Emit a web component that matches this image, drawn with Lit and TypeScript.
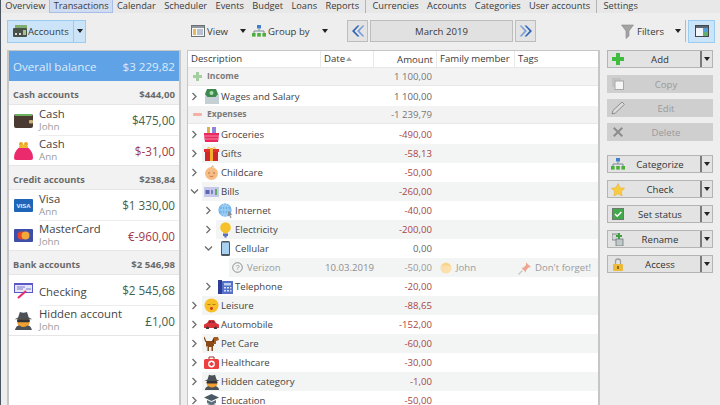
import { LitElement, html, css, svg, nothing } from "lit";
import { customElement } from "lit/decorators.js";

const ic = (w: number, h: number, body: unknown) =>
  html`<svg class="ic" width=${w} height=${h} viewBox="0 0 ${w} ${h}">${body}</svg>`;

const spy = svg`<circle cx="8" cy="9" r="5.4" fill="#f0a030"/><path d="M3.5 5.5 L5 .8 Q8 2.2 11 .8 L12.5 5.5 L15.5 7 H.5Z" fill="#4b5157"/><rect x="2.6" y="7" width="10.8" height="2.6" rx="1.2" fill="#2f3338"/><path d="M.8 16 Q2 12 5 12.4 Q8 14.6 11 12.4 Q14 12 15.2 16Z" fill="#4b5157"/>`;

const icons: Record<string, unknown> = {
  accounts: ic(16, 14, svg`<rect x="3" y="1" width="12" height="7" fill="#7fae6e"/><rect x="1" y="4" width="14" height="9" rx="1" fill="#4a5148"/><rect x="3" y="9" width="2" height="2" fill="#d8d8d8"/><rect x="7" y="9" width="2" height="2" fill="#d8d8d8"/><rect x="11" y="6" width="3" height="5" fill="#9fc58c"/>`),
  view: ic(14, 12, svg`<rect x=".5" y=".5" width="13" height="11" fill="#f6f6f6" stroke="#6b7076"/><rect x="1" y="1" width="12" height="2" fill="#8f97a0"/><rect x="2" y="4" width="3" height="6" fill="#e9b95c"/><path d="M6 5h6M6 7h6M6 9h6" stroke="#7a8da8"/>`),
  group: ic(14, 12, svg`<rect x="5" y="0" width="4" height="3.5" fill="#3f7fd0"/><path d="M7 3.5V6M2 8V6H12V8" stroke="#7a8a99" fill="none"/><rect x="0" y="8" width="3.6" height="3.6" fill="#4caf3c"/><rect x="5.2" y="8" width="3.6" height="3.6" fill="#4caf3c"/><rect x="10.4" y="8" width="3.6" height="3.6" fill="#4caf3c"/>`),
  left: ic(14, 12, svg`<path d="M6.5 0.5 L1 6 L6.5 11.5 L8.5 11.5 L3.5 6 L8.5 .5Z" fill="#2f66b8"/><path d="M11.5 .5 L6 6 L11.5 11.5 L13.5 11.5 L8.5 6 L13.5 .5Z" fill="#7d9fd6"/>`),
  right: ic(14, 12, svg`<path d="M7.5 .5 L13 6 L7.5 11.5 L5.5 11.5 L10.5 6 L5.5 .5Z" fill="#2f66b8"/><path d="M2.5 .5 L8 6 L2.5 11.5 L.5 11.5 L5.5 6 L.5 .5Z" fill="#7d9fd6"/>`),
  funnel: ic(13, 15, svg`<path d="M.5 1 H12.5 L8 7 V12 L5 14.5 V7Z" fill="#a3a3a3" stroke="#8b8b8b" stroke-width=".6"/>`),
  panel: ic(14, 12, svg`<rect x=".5" y=".5" width="13" height="11" fill="#f2f6fa" stroke="#40464c"/><rect x="1" y="1" width="12" height="2" fill="#5a6772"/><rect x="8" y="3" width="5" height="4" fill="#4fa0d8"/><rect x="8" y="7" width="5" height="4" fill="#61b06c"/>`),
  wallet: ic(19, 15, svg`<rect x="0" y="1" width="19" height="14" rx="2" fill="#4a3a32"/><rect x="1" y="1" width="17" height="2" fill="#6bb05c"/><rect x="15" y="7" width="4" height="3.4" rx="1" fill="#c9b27a"/>`),
  purse: ic(19, 20, svg`<circle cx="7" cy="3" r="2" fill="#e9a820"/><circle cx="12" cy="3" r="2" fill="#e9a820"/><path d="M5 5 Q9.5 2 14 5 L14 8 H5Z" fill="#f0b830"/><path d="M4.5 7 H14.5 Q19 11 19 17 Q19 19 17 19 H2 Q0 19 0 17 Q0 11 4.5 7Z" fill="#ea2a6c"/>`),
  visa: ic(19, 13, svg`<rect width="19" height="13" rx="1" fill="#1f66b8"/><text x="9.5" y="9" font-size="6" font-weight="700" font-family="Liberation Sans" fill="#e8f0fa" text-anchor="middle">VISA</text>`),
  mc: ic(19, 13, svg`<rect width="19" height="13" rx="1" fill="#3f4fa8"/><circle cx="7.5" cy="6.5" r="4" fill="#e8432e"/><circle cx="11.5" cy="6.5" r="4" fill="#f2a93a"/>`),
  check: ic(19, 16, svg`<rect x="0" y="0" width="19" height="10" fill="#5a58c8"/><rect x="1" y="2" width="17" height="7" fill="#e6e6f6"/><path d="M3 4h8M12 6h5M3 6h6" stroke="#7a78cc"/><path d="M4 15 L12 8" stroke="#ec2c6c" stroke-width="2.2"/>`),
  spy: ic(16, 16, spy),
  spyB: ic(19, 19, svg`<g transform="scale(1.18)">${spy}</g>`),
  plusS: ic(9, 9, svg`<path d="M3 0h3v3h3v3H6v3H3V6H0V3h3z" fill="#a4d0a0"/>`),
  minusS: ic(9, 9, svg`<rect x="0" y="3" width="9" height="3" rx="1" fill="#f2b1a4"/>`),
  wages: ic(15, 15, svg`<rect x="1" y="5" width="14" height="10" fill="#c5d0d4"/><path d="M3 0h9l2 5-2.5 3h-8L1 5z" fill="#3e8a4c"/><circle cx="7.5" cy="4" r="2" fill="#a9dcae"/>`),
  groceries: ic(15, 15, svg`<rect x="3" y="0" width="3" height="6" fill="#e0b040"/><rect x="8" y="0" width="4" height="6" fill="#8f86da"/><path d="M0 6h15v2l-1 7H1L0 8z" fill="#e8285f"/><path d="M0 9h15M0 12h15" stroke="#f58aa8"/>`),
  gifts: ic(15, 15, svg`<rect x="1" y="4" width="13" height="11" fill="#d02828"/><rect x="0" y="3" width="15" height="3" fill="#e03030"/><rect x="6" y="2" width="3" height="13" fill="#f0b030"/><path d="M7.5 3 Q3 0 4 3M7.5 3 Q12 0 11 3" stroke="#f0b030" fill="none"/>`),
  baby: ic(15, 15, svg`<circle cx="7.5" cy="8.5" r="6.5" fill="#f8bd85"/><circle cx="5" cy="8" r=".8" fill="#9a6a40"/><circle cx="10" cy="8" r=".8" fill="#9a6a40"/><path d="M5.5 11q2 1.4 4 0" stroke="#c47a50" fill="none"/><path d="M7.5 2q1-1.5 2-.6" stroke="#b98a55" fill="none"/>`),
  bills: ic(15, 10, svg`<rect width="15" height="10" fill="#c6c8ea"/><rect x="1.5" y="3" width="4" height="4" fill="#5f63b0"/><rect x="7" y="3" width="2" height="4" fill="#7a80c0"/><rect x="11" y="2" width="2" height="6" fill="#5dae6a"/>`),
  internet: ic(15, 15, svg`<circle cx="7" cy="7" r="6.6" fill="#6fb4ea"/><path d="M0 7h14M7 0v14M2 3h10M2 11h10" stroke="#a8d4f4" fill="none"/><ellipse cx="7" cy="7" rx="3" ry="6.5" stroke="#a8d4f4" fill="none"/><path d="M10 8l4.5 3.5-2 .5 1 2.5-1.2.5-1-2.5L10 13.5z" fill="#8a8f94"/>`),
  bulb: ic(15, 16, svg`<circle cx="7.5" cy="5.5" r="5.3" fill="#f6c22c"/><path d="M5 9h5v2.5H5z" fill="#f6c22c"/><rect x="5" y="11.5" width="5" height="2.5" fill="#5a6fc0"/><rect x="6.4" y="14" width="2.2" height="1.6" fill="#5a6fc0"/>`),
  phone: ic(15, 15, svg`<rect x="3" y="0" width="9" height="15" rx="1.5" fill="#4d5760"/><rect x="4" y="1.5" width="7" height="11.5" fill="#a8d0f0"/>`),
  tel: ic(15, 14, svg`<rect x="0" y="0" width="4" height="14" fill="#2e3e98"/><rect x="4" y="1" width="11" height="13" fill="#5670c8"/><rect x="6" y="3" width="7" height="2.5" fill="#bcd0f0"/><path d="M6 7h2v1.5H6zM9 7h2v1.5H9zM12 7h1.5v1.5H12zM6 10h2v1.5H6zM9 10h2v1.5H9zM12 10h1.5v1.5H12z" fill="#d8e2f6"/>`),
  leisure: ic(15, 15, svg`<circle cx="7.5" cy="7.5" r="7" fill="#f8c026"/><path d="M3.5 6.5h3M8.5 6.5h3" stroke="#b47b10"/><circle cx="7.5" cy="10.5" r="1.4" fill="#d03020"/>`),
  car: ic(15, 9, svg`<path d="M3 3 L5 0 H10 L12 3 L15 4.5 V8 H0 V4.5Z" fill="#d8343a"/><path d="M5.5 1h1.8v2H4.3zM8.2 1H10l1 2H8.2z" fill="#8a2a30"/><circle cx="3.5" cy="8" r="1.6" fill="#3d3d3d"/><circle cx="11.5" cy="8" r="1.6" fill="#3d3d3d"/>`),
  dog: ic(15, 15, svg`<path d="M2 5h8v5h-1v5H7v-4H5v4H3v-4H2z" fill="#8a4a18"/><path d="M10 5 L10 1 L14 1 L15 4 L12 5 L12 8 H9z" fill="#a45a20"/><path d="M10 1l-2 4 2 2z" fill="#5a2f10"/><path d="M3 10v5M7 11v4" stroke="#e8e0d8"/><path d="M2 6L0 1" stroke="#8a4a18" stroke-width="1.2"/>`),
  health: ic(15, 13, svg`<path d="M5 3V1h5v2" stroke="#a52a2a" fill="none"/><rect y="3" width="15" height="10" rx="1.5" fill="#ec4040"/><circle cx="7.5" cy="8" r="3.4" fill="#fff"/><path d="M6.6 6h1.8v1.1h1.1v1.8H8.4V10H6.6V8.9H5.5V7.1h1.1z" fill="#ec4040"/>`),
  edu: ic(15, 14, svg`<path d="M7.5 0 L15 3.5 L7.5 7 L0 3.5Z" fill="#4a5a64"/><path d="M3 6v3q4.5 2.5 9 0V6l-4.5 2z" fill="#5d6f7a"/><path d="M3 11q4.5-2 9 0v3H3z" fill="#5d6f7a"/>`),
  help: ic(11, 11, svg`<circle cx="5.5" cy="5.5" r="4.8" fill="none" stroke="#8d8d8d"/><text x="5.5" y="8.2" font-size="7.5" font-family="Liberation Sans" fill="#8d8d8d" text-anchor="middle">?</text>`),
  johnBaby: ic(12, 13, svg`<circle cx="6" cy="7" r="5.6" fill="#fbe0ae"/><path d="M1 5.5Q6 -2 11 5.5Q6 3.5 1 5.5" fill="#f8d58a"/>`),
  pin: ic(14, 14, svg`<path d="M8 1.5 L13 6 L10.5 6.5 L8 9.5 L8 11.5 L3.5 7 L5.5 6.5 L8 4Z" fill="#efa58f"/><path d="M4.5 9.5 L.5 13.5" stroke="#c9c9c9" stroke-width="1.4"/>`),
  add: ic(12, 12, svg`<path d="M4 0h4v4h4v4H8v4H4V8H0V4h4z" fill="#3fbd3f"/>`),
  copy: ic(12, 12, svg`<rect x="0" y="0" width="8" height="8" fill="#c4c4c4" stroke="#bcbcbc"/><rect x="3" y="3" width="8.5" height="8.5" fill="#f6f6f6" stroke="#a8a8a8"/>`),
  edit: ic(14, 14, svg`<path d="M1 13 L2 9.5 L11 1 L13.4 3.4 L4.4 12Z" fill="#dcdcdc" stroke="#8c8c8c"/>`),
  del: ic(12, 12, svg`<path d="M1 2.5 L2.5 1 L6 4.5 L9.5 1 L11 2.5 L7.5 6 L11 9.5 L9.5 11 L6 7.5 L2.5 11 L1 9.5 L4.5 6Z" fill="#8e8e8e"/>`),
  star: ic(14, 13, svg`<path d="M7 .5l2 4.2 4.6.6-3.3 3.2.8 4.5L7 10.8 2.9 13l.8-4.5L.4 5.3 5 4.7z" fill="#f8cc40" stroke="#e8a828" stroke-width=".5"/>`),
  status: ic(12, 12, svg`<rect width="12" height="12" fill="#6a7a6c"/><rect x="1" y="1" width="10" height="10" fill="#42a84a"/><path d="M3 6l2.2 2.2L9.4 4" stroke="#fff" stroke-width="1.5" fill="none"/>`),
  rename: ic(12, 13, svg`<rect y="1" width="7" height="6" fill="#d8d8d8" stroke="#5e6a70" stroke-width=".7"/><rect x="4" y="6" width="7" height="7" fill="#c0c8c8" stroke="#5e6a70" stroke-width=".7"/><path d="M6 0h2v2h2v2H8v2H6V4H4V2h2z" fill="#3fa040"/>`),
  lock: ic(10, 13, svg`<path d="M2.5 6V3.5a2.5 2.5 0 0 1 5 0V6" stroke="#a0a0a0" stroke-width="1.3" fill="none"/><rect y="6" width="10" height="7" rx="1" fill="#ecb93a"/><rect x="4.2" y="8" width="1.6" height="3" fill="#7a5a10"/>`),
};

const menu1 = ["Overview", "Transactions", "Calendar", "Scheduler", "Events", "Budget", "Loans", "Reports"];
const menu2 = ["Currencies", "Accounts", "Categories", "User accounts"];

type Acc = { icon: string; name: string; sub?: string; amt: string; red?: boolean };
const accGroups: { title: string; total: string; items: Acc[] }[] = [
  { title: "Cash accounts", total: "$444,00", items: [
    { icon: "wallet", name: "Cash", sub: "John", amt: "$475,00" },
    { icon: "purse", name: "Cash", sub: "Ann", amt: "$-31,00", red: true } ] },
  { title: "Credit accounts", total: "$238,84", items: [
    { icon: "visa", name: "Visa", sub: "Ann", amt: "$1 330,00" },
    { icon: "mc", name: "MasterCard", sub: "John", amt: "€-960,00", red: true } ] },
  { title: "Bank accounts", total: "$2 546,98", items: [
    { icon: "check", name: "Checking", amt: "$2 545,68" },
    { icon: "spyB", name: "Hidden account", sub: "John", amt: "£1,00" } ] },
];

type Row = { k?: "group" | "tx"; lvl?: number; open?: boolean; icon: string; name: string; amt: string; red?: boolean };
const rows: Row[] = [
  { k: "group", icon: "plusS", name: "Income", amt: "1 100,00" },
  { lvl: 0, icon: "wages", name: "Wages and Salary", amt: "1 100,00" },
  { k: "group", icon: "minusS", name: "Expenses", amt: "-1 239,79" },
  { lvl: 0, icon: "groceries", name: "Groceries", amt: "-490,00", red: true },
  { lvl: 0, icon: "gifts", name: "Gifts", amt: "-58,13", red: true },
  { lvl: 0, icon: "baby", name: "Childcare", amt: "-50,00", red: true },
  { lvl: 0, open: true, icon: "bills", name: "Bills", amt: "-260,00", red: true },
  { lvl: 1, icon: "internet", name: "Internet", amt: "-40,00", red: true },
  { lvl: 1, icon: "bulb", name: "Electricity", amt: "-200,00", red: true },
  { lvl: 1, open: true, icon: "phone", name: "Cellular", amt: "0,00" },
  { k: "tx", lvl: 2, icon: "help", name: "Verizon", amt: "-50,00" },
  { lvl: 1, icon: "tel", name: "Telephone", amt: "-20,00", red: true },
  { lvl: 0, icon: "leisure", name: "Leisure", amt: "-88,65", red: true },
  { lvl: 0, icon: "car", name: "Automobile", amt: "-152,00", red: true },
  { lvl: 0, icon: "dog", name: "Pet Care", amt: "-60,00", red: true },
  { lvl: 0, icon: "health", name: "Healthcare", amt: "-30,00", red: true },
  { lvl: 0, icon: "spy", name: "Hidden category", amt: "-1,00", red: true },
  { lvl: 0, icon: "edu", name: "Education", amt: "-50,00", red: true },
];

const chev = (open: boolean) => html`<svg class="chev" width="9" height="9" viewBox="0 0 9 9"><path d=${open ? "M1 2.5 L4.5 6 L8 2.5" : "M2.5 1 L6 4.5 L2.5 8"} fill="none" stroke="#6e6e6e" stroke-width="1.3"/></svg>`;

type Btn = { icon: string; label: string; off?: boolean; split?: boolean };
const btnGroups: Btn[][] = [
  [ { icon: "add", label: "Add", split: true }, { icon: "copy", label: "Copy", off: true }, { icon: "edit", label: "Edit", off: true }, { icon: "del", label: "Delete", off: true } ],
  [ { icon: "group", label: "Categorize", split: true }, { icon: "star", label: "Check", split: true }, { icon: "status", label: "Set status", split: true }, { icon: "rename", label: "Rename", split: true }, { icon: "lock", label: "Access", split: true } ],
];

@customElement("app-root")
export class AppRoot extends LitElement {
  static styles = css`
    :host { display: block; width: 720px; height: 405px; overflow: hidden; background: #eeeeee; color: #3a3a3a;
      font: 9.6px/13px "Open Sans", "Noto Sans", sans-serif; box-sizing: border-box; border-left: 1px solid #4a5561; }
    * { box-sizing: border-box; }
    svg { display: block; flex: none; }
    .menu { height: 13px; background: #e8e8e8; display: flex; font-size: 9.25px; }
    .menu span { padding: 0 4.2px; height: 13px; line-height: 12px; white-space: nowrap; flex: none; }
    .menu .sel { background: #cfdcf2; border: 1px solid #a7bfe6; border-top: 0; height: 13px; line-height: 12px; padding: 0 3.2px; }
    .menu .sep { width: 1px; padding: 0; background: #b4b4b4; margin: 0 2px 2px; }
    .tools { height: 37px; display: flex; align-items: center; padding: 0 7px 1px 6px; }
    .tools > * { flex: none; }
    .acc { width: 79px; height: 23px; display: flex; background: #cce4f7; border: 1px solid #9accf2; margin-right: 105px; }
    .acc .m { flex: 1; display: flex; align-items: center; padding-left: 4px; border-right: 1px solid #9accf2; }
    .acc .c { width: 11px; flex: none; display: flex; align-items: center; justify-content: center; }
    .caret { width: 0; height: 0; border: 3px solid transparent; border-top: 4px solid #222; border-bottom: 0; flex: none; }
    .ti { display: flex; align-items: center; gap: 2px; }
    .ti .caret { margin-left: 10px; }
    .view { width: 61px; }
    .grp { width: 95px; }
    .nav { width: 21px; height: 22px; border: 1px solid #bdbdbd; background: #e4e4e4; display: flex; align-items: center; justify-content: center; }
    .month { width: 143px; height: 22px; margin: 0 2px; border: 1px solid #bdbdbd; background: #e1e1e1; display: flex; align-items: center; justify-content: center; }
    .flt { display: flex; align-items: center; margin-left: 85px; gap: 3px; }
    .flt .caret { margin-left: 8px; }
    .vsep { width: 1px; height: 22px; background: #b8b8b8; margin: 0 2px 0 4px; }
    .pbtn { width: 27px; height: 23px; background: #cce4f7; border: 1px solid #9accf2; display: flex; align-items: center; justify-content: center; }
    .main { display: flex; height: 355px; padding: 0 6px; }
    .left { width: 174px; flex: none; margin-right: 6px; background: #fff; border: 1px solid #c6c6c6; border-bottom: 0; border-left-width: 2px; border-right-width: 2px; }
    .bal { height: 30px; background: #5fa3e6; color: #dcebfa; display: flex; justify-content: space-between; align-items: center; padding: 1px 4px 0; font-size: 11.6px; }
    .gh { height: 24px; display: flex; justify-content: space-between; align-items: center; padding: 3px 4px 0; background: #f2f2f2; color: #6a6a6a; font-weight: 700; font-size: 9.2px; border-bottom: 1px solid #e6e6e6; }
    .gh span + span { font-size: 9.6px; }
    .ar { height: 30.5px; display: flex; align-items: center; }
    .ai { width: 30px; flex: none; padding: 1px 0 0 5px; display: flex; justify-content: flex-start; }
    .ab { flex: 1; display: flex; align-items: center; height: 100%; border-bottom: 1px solid #ededed; padding-right: 4px; min-width: 0; }
    .ar.last { border-bottom: 1px solid #e6e6e6; }
    .ar.last .ab { border-bottom: 0; }
    .an { flex: 1; }
    .an div:first-child { font-size: 11.3px; line-height: 14px; color: #444; }
    .an div + div { font-size: 9.8px; line-height: 12px; color: #9a9a9a; }
    .an.solo { padding-top: 4px; }
    .aa { font-size: 11.7px; color: #3f6350; padding-top: 2px; }
    .aa.red { color: #a23a48; }
    .tbl { width: 413px; flex: none; margin-right: 7px; background: #fff; border: 1px solid #c6c6c6; border-bottom: 0; border-right-width: 2px; overflow: hidden; }
    .cols { display: flex; align-items: stretch; }
    .d { flex: 1; min-width: 0; display: flex; align-items: center; white-space: nowrap; }
    .dt { width: 53px; flex: none; padding-left: 3px; white-space: nowrap; }
    .am { width: 63px; flex: none; text-align: right; padding-right: 5px; white-space: nowrap; }
    .fm { width: 78px; flex: none; padding-left: 3px; display: flex; align-items: center; gap: 4px; white-space: nowrap; }
    .tg { width: 83px; flex: none; padding-left: 3px; display: flex; align-items: center; gap: 3px; white-space: nowrap; }
    .head { height: 17px; border-bottom: 1px solid #e8e8e8; }
    .head > div { border-right: 1px solid #e8e8e8; line-height: 18px; height: 16px; }
    .head .d { padding-left: 3px; }
    .head .am { padding-right: 3px; }
    .head .tg { border-right: 0; }
    .sort { width: 0; height: 0; border: 3px solid transparent; border-bottom: 4px solid #a5a5a5; border-top: 0; margin-left: 1px; }
    .dt.hd { display: flex; align-items: center; }
    .gr { height: 18px; line-height: 17px; background: #f3f3f3; color: #7b7b7b; font-weight: 700; font-size: 8.6px; border-bottom: 1px solid #e8e8e8; margin-bottom: 1px; }
    .gr .d { padding-left: 5px; gap: 5px; }
    .gr .am { color: #777; font-size: 9.6px; font-weight: 400; }
    .tr { height: 19px; display: flex; color: #444; }
    .tr .cw { width: 14px; flex: none; display: flex; align-items: center; justify-content: center; padding-right: 1px; }
    .tr.l1 { padding-left: 14px; }
    .tr.l2 { padding-left: 27px; }
    .tr .cols { flex: 1; min-width: 0; align-items: center; height: 19px; }
    .tr .cols > div { height: 19px; line-height: 19px; }
    .tr.alt .cols { background: #f3f4f4; }
    .tr .d { gap: 2px; padding-left: 2px; }
    .tr .iw { width: 15px; display: flex; justify-content: center; flex: none; }
    .tr .am { color: #666; }
    .tr .am.red { color: #a84545; }
    .tr.tx { color: #9b9b9b; }
    .tr.tx .am { color: #999; }
    .tr.tx .iw { width: 11px; }
    .tr.tx .d { gap: 4px; padding-left: 3px; }
    .tr.tx .dt { color: #8e8e8e; padding-left: 4px; }
    .side { width: 106px; flex: none; display: flex; flex-direction: column; gap: 14px; }
    .bg { display: flex; flex-direction: column; gap: 6px; }
    .bg.wide { gap: 7px; }
    .bg .b.first { margin-bottom: 1px; }
    .b { height: 18px; display: flex; align-items: center; background: #e3e3e3; border: 1px solid #b4b4b4; padding-left: 2px; color: #333; }
    .b .bi { width: 16px; flex: none; display: flex; justify-content: center; }
    .b .bl { flex: 1; text-align: center; padding-right: 6px; }
    .b.off { background: #cfcfcf; border-color: #cfcfcf; color: #9a9a9a; }
    .b .sp { width: 12px; flex: none; height: 100%; border-left: 2px solid #7a7a7a; display: flex; align-items: center; justify-content: center; background: #e3e3e3; }
    .b .sp .caret { border-width: 3.5px; border-bottom: 0; border-top-width: 4px; }
  `;

  render() {
    return html`
      <div class="menu">
        ${menu1.map((m, i) => html`<span class=${i === 1 ? "sel" : ""}>${m}</span>`)}
        <span class="sep"></span>
        ${menu2.map((m) => html`<span>${m}</span>`)}
        <span class="sep"></span>
        <span>Settings</span>
      </div>
      <div class="tools">
        <div class="acc"><div class="m">${icons.accounts}<span>Accounts</span></div><div class="c"><i class="caret"></i></div></div>
        <div class="ti view">${icons.view}<span>View</span><i class="caret"></i></div>
        <div class="ti grp">${icons.group}<span>Group by</span><i class="caret"></i></div>
        <div class="nav">${icons.left}</div>
        <div class="month">March 2019</div>
        <div class="nav">${icons.right}</div>
        <div class="flt">${icons.funnel}<span>Filters</span><i class="caret"></i></div>
        <div class="vsep"></div>
        <div class="pbtn">${icons.panel}</div>
      </div>
      <div class="main">
        <div class="left">
          <div class="bal"><span>Overall balance</span><span>$3 229,82</span></div>
          ${accGroups.map((g) => html`
            <div class="gh"><span>${g.title}</span><span>${g.total}</span></div>
            ${g.items.map((a, i) => html`
              <div class="ar ${i === g.items.length - 1 ? "last" : ""}">
                <div class="ai">${icons[a.icon]}</div>
                <div class="ab">
                  <div class="an ${a.sub ? "" : "solo"}"><div>${a.name}</div>${a.sub ? html`<div>${a.sub}</div>` : nothing}</div>
                  <div class="aa ${a.red ? "red" : ""}">${a.amt}</div>
                </div>
              </div>`)}
          `)}
        </div>
        <div class="tbl">
          <div class="cols head">
            <div class="d">Description</div>
            <div class="dt hd">Date<i class="sort"></i></div>
            <div class="am">Amount</div>
            <div class="fm">Family member</div>
            <div class="tg">Tags</div>
          </div>
          ${rows.map((r, i) => this.row(r, i))}
        </div>
        <div class="side">
          ${btnGroups.map((g, gi) => html`<div class="bg ${gi ? "wide" : ""}">${g.map((b, i) => html`
            <div class="b ${b.off ? "off" : ""} ${!gi && !i ? "first" : ""}">
              <div class="bi">${icons[b.icon]}</div>
              <div class="bl">${b.label}</div>
              ${b.split ? html`<div class="sp"><i class="caret"></i></div>` : nothing}
            </div>`)}</div>`)}
        </div>
      </div>
    `;
  }

  row(r: Row, i: number) {
    if (r.k === "group") {
      return html`<div class="cols gr"><div class="d">${icons[r.icon]}<span>${r.name}</span></div><div class="dt"></div><div class="am">${r.amt}</div><div class="fm"></div><div class="tg"></div></div>`;
    }
    const alt = i % 2 === 0;
    const tx = r.k === "tx";
    return html`<div class="tr l${r.lvl} ${alt ? "alt" : ""} ${tx ? "tx" : ""}">
      <div class="cw">${tx ? nothing : chev(!!r.open)}</div>
      <div class="cols">
        <div class="d"><div class="iw">${icons[r.icon]}</div><span>${r.name}</span></div>
        <div class="dt">${tx ? "10.03.2019" : ""}</div>
        <div class="am ${r.red ? "red" : ""}">${r.amt}</div>
        <div class="fm">${tx ? html`${icons.johnBaby}<span>John</span>` : nothing}</div>
        <div class="tg">${tx ? html`${icons.pin}<span>Don't forget!</span>` : nothing}</div>
      </div>
    </div>`;
  }
}
